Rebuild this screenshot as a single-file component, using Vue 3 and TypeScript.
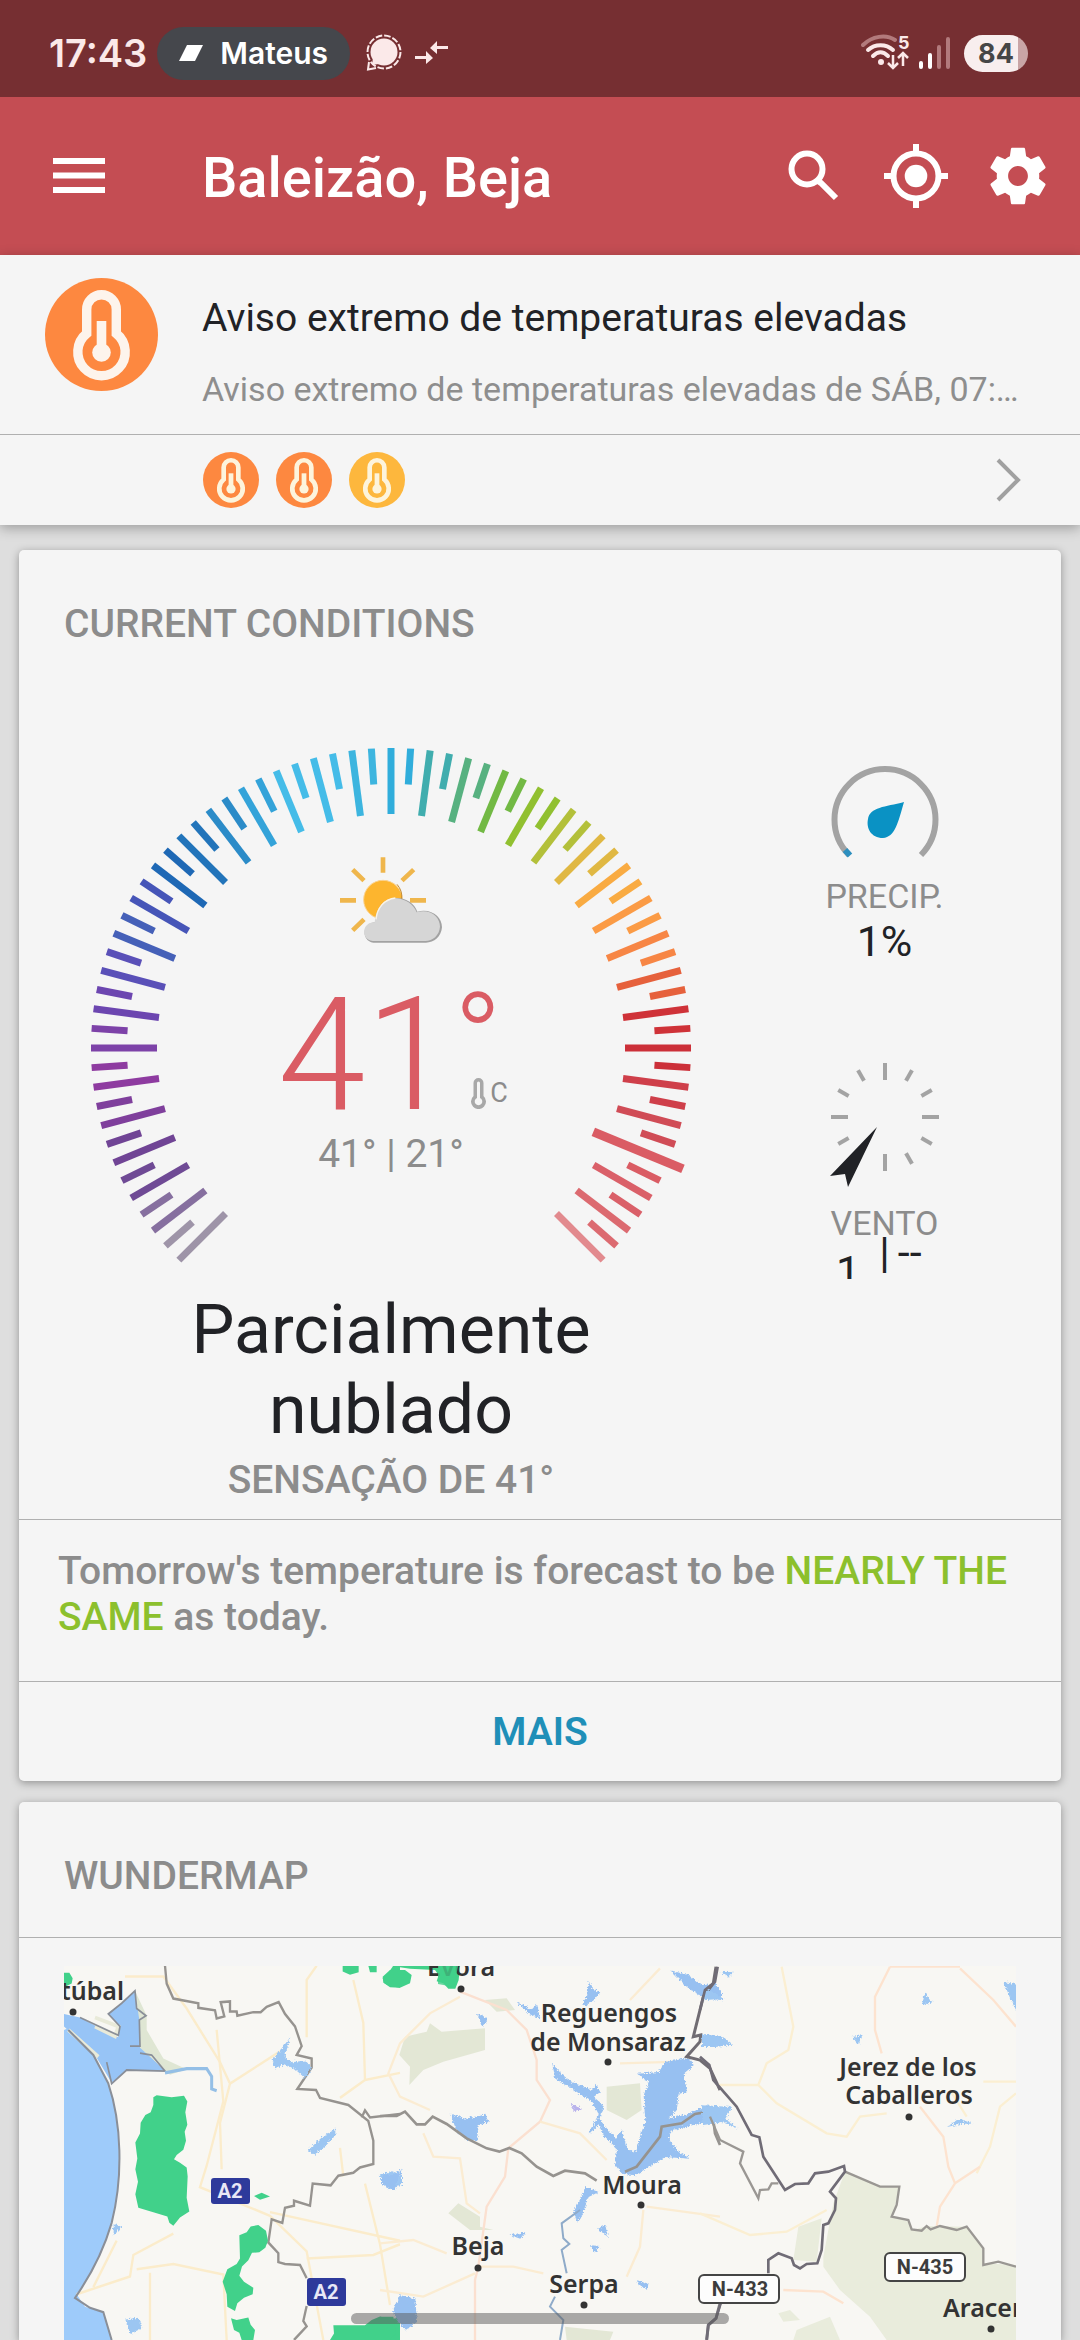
<script setup lang="ts">
interface Tick {
  angle: number
  inner: number
  outer: number
  width: number
  color: string
}

const scale: string[] = [
  '#9e94a8', '#866f9f', '#6f4a95', '#704495', '#7f3f9c', '#8e3ba0', '#7d42a8', '#6c46b0',
  '#5a50b8', '#4560b8', '#4655b8', '#1e68b5', '#2274ba', '#2b8bc8', '#34a3d9', '#45bce8',
  '#45bce8', '#3db5df', '#30addb', '#40adae', '#57b180', '#72b944', '#91c030', '#b3c03a',
  '#e0b843', '#f9ab42', '#fb9b45', '#f78645', '#e6613c', '#cf3238', '#cc3039', '#cf3f4a',
  '#d04c56', '#da5c64', '#da6069', '#dc6a70', '#e28a8e',
]

const currentStep = 33
const ticks: Tick[] = []
scale.forEach((color, i) => {
  const angle = -135 + i * 7.5
  const current = i === currentStep
  ticks.push({ angle, inner: current ? 219 : 234, outer: current ? 316 : 300, width: current ? 9 : 7, color })
  if (i < scale.length - 1) {
    ticks.push({ angle: angle + 3.75, inner: 264, outer: 300, width: 7, color })
  }
})

const compass = Array.from({ length: 12 }, (_, i) => i * 30).filter((a) => a !== 210)

const warnings = ['#fd8840', '#fd8840', '#fdb73d']

const stem = 'M41.7 55.5V31.5A14.8 14.8 0 0 1 71.3 31.5V55.5A23.7 23.7 0 1 1 41.7 55.5Z'

const cities = [
  { name: 'Reguengos', x: 545, y: 56 },
  { name: 'de Monsaraz', x: 544, y: 85 },
  { name: 'Moura', x: 578, y: 228 },
  { name: 'Beja', x: 414, y: 289 },
  { name: 'Serpa', x: 520, y: 327 },
  { name: 'Jerez de los', x: 844, y: 110 },
  { name: 'Caballeros', x: 845, y: 138 },
  { name: 'Évora', x: 397, y: 10 },
]
const dots = [
  [9, 46], [397, 23], [544, 96], [577, 239], [414, 302], [520, 339], [845, 151], [927, 363],
]
</script>

<template>
  <div class="page">
    <header>
      <div class="status">
        <span class="clock">17:43</span>
        <span class="call">
          <svg width="24" height="16" viewBox="0 0 24 16"><path d="M8 0H24L16 16H0Z" fill="#fff" /></svg>
          Mateus
        </span>
        <svg class="chat" width="36" height="38" viewBox="0 0 36 38" fill="none" stroke="#fbe9e9">
          <circle cx="18" cy="18" r="13.500" fill="#fbe9e9" stroke="none" />
          <circle cx="18" cy="18" r="16.500" stroke-width="2" stroke-dasharray="6.600 2" />
          <path d="M6 31L7 24L13 30Z" fill="#fbe9e9" stroke="none" />
          <path d="M3 28L2 35.500L10 34" stroke-width="2" />
        </svg>
        <svg width="34" height="24" viewBox="0 0 34 24" fill="#fbe9e9">
          <path d="M0 15H11V10L18 17L11 23V18H0Z M33 5H22V0L15 7L22 13V8H33Z" />
        </svg>
        <span class="spacer"></span>
        <svg class="wifi" width="50" height="38" viewBox="0 0 50 38" fill="none" stroke="#fbe9e9" stroke-width="4">
          <path d="M2 11C11 2 25 0 34 6" stroke="#b27a7c" stroke-linecap="round" />
          <path d="M7 16C14 9.500 25 9.500 32 16" stroke-linecap="round" />
          <path d="M12 22C17 17 22 17 27 22" stroke-linecap="round" />
          <circle cx="20" cy="28" r="3" fill="#fbe9e9" stroke="none" />
          <path d="M32 21V33M27 29L32 34L37 29M42 32V20M37 24L42 19L47 24" stroke-width="2.500" />
          <text x="37" y="15" font-size="18" font-weight="700" fill="#fbe9e9" stroke="none">5</text>
        </svg>
        <svg class="bars" width="32" height="36" viewBox="0 0 32 36" stroke-width="4" stroke-linecap="round">
          <path d="M2 28V32M11 20V32" stroke="#fff" />
          <path d="M20 12V32M29 4V32" stroke="#b27a7c" />
        </svg>
        <span class="battery">84</span>
      </div>
      <div class="appbar">
        <button aria-label="Menu">
          <svg width="54" height="64" viewBox="0 0 54 64" stroke="#fff" stroke-width="6">
            <path d="M1 17H53M1 31.500H53M1 46H53" />
          </svg>
        </button>
        <h1>Baleizão, Beja</h1>
        <button aria-label="Search">
          <svg width="64" height="64" viewBox="0 0 64 64" fill="none" stroke="#fff" stroke-width="6">
            <circle cx="23" cy="25" r="15.500" />
            <path d="M33 36L37 39L52 54" />
          </svg>
        </button>
        <button class="locate" aria-label="My location">
          <svg width="64" height="64" viewBox="0 0 64 64" fill="none" stroke="#fff" stroke-width="6">
            <circle cx="32" cy="32" r="22.500" />
            <circle cx="32" cy="32" r="11.300" fill="#fff" stroke="none" />
            <path d="M32 0V9M32 55V64M0 32H9M55 32H64" />
          </svg>
        </button>
        <button aria-label="Settings">
          <svg width="68" height="68" viewBox="0 0 24 24" fill="#fff">
            <path d="M19.430 12.980c.04-.32.07-.64.07-.98s-.03-.66-.07-.98l2.110-1.650c.19-.15.24-.42.12-.64l-2-3.460c-.12-.22-.39-.3-.61-.22l-2.490 1c-.52-.4-1.080-.73-1.690-.98l-.38-2.650C14.460 2.180 14.250 2 14 2h-4c-.25 0-.46.18-.49.42l-.38 2.650c-.61.25-1.170.59-1.690.98l-2.490-1c-.23-.09-.49 0-.61.22l-2 3.460c-.13.22-.07.49.12.64l2.110 1.650c-.04.32-.07.65-.07.98s.03.66.07.98l-2.110 1.650c-.19.15-.24.42-.12.64l2 3.460c.12.22.39.3.61.22l2.490-1c.52.4 1.080.73 1.690.98l.38 2.650c.03.24.24.42.49.42h4c.25 0 .46-.18.49-.42l.38-2.650c.61-.25 1.170-.59 1.690-.98l2.490 1c.23.09.49 0 .61-.22l2-3.460c.12-.22.07-.49-.12-.64l-2.110-1.650zM12 15.500c-1.930 0-3.500-1.570-3.500-3.500s1.570-3.500 3.500-3.500 3.500 1.570 3.500 3.500-1.570 3.500-3.500 3.500z" />
          </svg>
        </button>
      </div>
    </header>

    <section class="alert">
      <div class="alert-main">
        <svg width="113" height="113" viewBox="0 0 113 113">
          <circle cx="56.500" cy="56.500" r="56.500" fill="#fd8840" />
          <path :d="stem" fill="none" stroke="#fdf4ec" stroke-width="9.400" />
          <path d="M51.700 43H61.300V70H51.700Z" fill="#fdf4ec" />
          <circle cx="56.500" cy="74.500" r="9.300" fill="#fdf4ec" />
        </svg>
        <div class="alert-text">
          <h2>Aviso extremo de temperaturas elevadas</h2>
          <p>Aviso extremo de temperaturas elevadas de SÁB, 07:…</p>
        </div>
      </div>
      <div class="alert-more">
        <svg v-for="(color, i) in warnings" :key="i" width="56" height="56" viewBox="0 0 113 113">
          <circle cx="56.500" cy="56.500" r="56.500" :fill="color" />
          <path :d="stem" fill="none" stroke="#fdf4dc" stroke-width="9.400" />
          <path d="M51.700 43H61.300V70H51.700Z" fill="#fdf4dc" />
          <circle cx="56.500" cy="74.500" r="9.300" fill="#fdf4dc" />
        </svg>
        <span class="spacer"></span>
        <button aria-label="All warnings">
          <svg width="26" height="44" viewBox="0 0 26 44" fill="none" stroke="#a0a0a0" stroke-width="4">
            <path d="M2 2L22 22L2 42" />
          </svg>
        </button>
      </div>
    </section>

    <main>
      <section class="card">
        <h2 class="card-title">CURRENT CONDITIONS</h2>
        <div class="conditions">
          <div class="left">
            <div class="gauge">
              <svg class="dial" width="640" height="542" viewBox="-320 -300 640 542">
                <line
                  v-for="t in ticks"
                  :key="t.angle"
                  x1="0"
                  x2="0"
                  :y1="-t.inner"
                  :y2="-t.outer"
                  :stroke="t.color"
                  :stroke-width="t.width"
                  :transform="`rotate(${t.angle})`"
                />
              </svg>
              <div class="reading">
                <svg width="102" height="86" viewBox="114 52 306 256">
                  <path
                    d="M243 52V98M152 89L186 122M335 89L300 122M114 181H162M324 181H372M152 271L186 238"
                    stroke="#efb64c"
                    stroke-width="14"
                  />
                  <circle cx="243" cy="179" r="58" fill="#fdb52e" stroke="#fbd391" stroke-width="3" />
                  <path d="M285 133A57 57 0 0 1 299 177" fill="none" stroke="#c48a2e" stroke-width="3" />
                  <path
                    d="M222 247C224 205 250 174 285 174C312 174 338 190 346 215C390 204 420 232 420 262C418 290 396 308 372 308H214C178 304 178 247 222 247Z"
                    fill="#a2a2a2"
                  />
                  <path
                    d="M218 247C222 198 250 172 284 175C312 178 334 192 344 217C386 205 414 232 414 260C412 286 392 303 370 303H212C176 299 178 247 218 247Z"
                    fill="#d6d6d6"
                  />
                  <path d="M222 238C226 204 246 178 280 174" fill="none" stroke="#faf3e6" stroke-width="4" />
                </svg>
                <div class="temp">
                  <span class="value">41</span>
                  <span class="side">
                    <span class="degree">°</span>
                    <span class="unit">
                      <svg width="15" height="31" viewBox="0 0 15 31">
                        <path d="M2.500 5A5 5 0 0 1 12.500 5V18A7.500 7.500 0 1 1 2.500 18Z" fill="#a8a8a8" />
                        <path d="M6 5A1.500 1.500 0 0 1 9 5V20A3.800 3.800 0 1 1 6 20Z" fill="#f5f5f5" />
                      </svg>
                      C
                    </span>
                  </span>
                </div>
                <p class="range">41° | 21°</p>
              </div>
            </div>
            <p class="sky">Parcialmente nublado</p>
            <p class="feels">SENSAÇÃO DE 41°</p>
          </div>
          <div class="right">
            <svg width="112" height="113" viewBox="-56 -56 112 113" fill="none">
              <path d="M-36 36A50.500 50.500 0 1 1 36 36" stroke="#a3a3a3" stroke-width="6" />
              <path d="M-35 36.500L-40 31" stroke="#2d8fbf" stroke-width="6" />
              <path d="M19 -17C13 4 10 18 -2 19C-14 19 -19 9 -17 0C-15 -12 0 -12 19 -17Z" fill="#0a92c4" />
            </svg>
            <p class="label">PRECIP.</p>
            <p class="amount">1%</p>
            <svg class="wind" width="112" height="142" viewBox="-56 -56 112 142">
              <line
                v-for="a in compass"
                :key="a"
                x1="0"
                x2="0"
                :y1="a % 90 ? -42 : -37"
                y2="-54"
                stroke="#a3a3a3"
                stroke-width="4"
                :transform="`rotate(${a})`"
              />
              <path d="M-8 10L-55 59L-40 57L-37 70Z" fill="#212226" />
            </svg>
            <p class="label">VENTO</p>
            <p class="breeze"><span class="speed">1</span><span>|</span><span class="gust">--</span></p>
          </div>
        </div>
        <p class="forecast">
          Tomorrow's temperature is forecast to be <strong>NEARLY THE SAME</strong> as today.
        </p>
        <button class="more">MAIS</button>
      </section>

      <section class="card map-card">
        <h2 class="card-title">WUNDERMAP</h2>
        <div class="map-frame">
          <svg class="map" viewBox="0 0 952 374">
            <filter id="ragged" x="-5%" y="-5%" width="110%" height="110%">
              <feTurbulence type="turbulence" baseFrequency="0.12" numOctaves="2" seed="4" />
              <feDisplacementMap in="SourceGraphic" scale="12" xChannelSelector="R" yChannelSelector="G" />
              <feOffset dx="3" dy="3" />
            </filter>
            <rect width="952" height="374" fill="#f8f7f3" />
            <!-- western coast -->
            <g transform="translate(-24 -186) scale(0.33333 0.35714)" fill="none">
              <path d="M72 700L95 690L160 770L205 850C245 960 250 1110 215 1240C190 1320 150 1390 110 1440L135 1475L190 1490L215 1568H72Z" fill="#9ecbfa" />
              <path d="M72 655L120 665L190 700L235 720L240 690L205 655L245 625L285 590L290 640L318 660L298 672L300 745L375 815L260 812L215 848L165 770L72 690Z" fill="#97c4f6" />
              <path d="M165 665L235 690L225 718L165 690M85 700L175 775" stroke="#e9ead9" stroke-width="11" />
              <path d="M285 590L320 660V700L370 780L440 810L390 825L300 750L298 672Z" fill="#dfe6d3" />
              <g stroke="#fbeccb" stroke-width="7">
                <path d="M255 550H370L440 640L540 790L570 850L540 960L545 1090" />
                <path d="M530 700L550 900L500 1080L480 1140L690 1220L800 1320L850 1568" />
                <path d="M110 1440L270 1390L280 1330L400 1270M290 1370L400 1355L550 1385L560 1568M330 1380V1568M160 1420L230 1290" />
                <path d="M570 850L720 760M830 520L800 560V720M940 560L970 680L975 840M975 840L1080 820M975 840L900 890M900 1030L910 1110M690 1210L1080 1290M975 1130L1020 1300L1050 1470M800 1340L1000 1330L1080 1300" />
              </g>
              <path d="M85 700L160 770L205 850C245 960 250 1110 215 1240C190 1320 150 1390 105 1450L150 1478L190 1490L215 1568" stroke="#8a8f98" stroke-width="6" />
              <path d="M120 665L235 715L240 690L205 655L245 625L285 590L290 640L318 660L298 672L300 745H270M300 765L335 770L375 815L260 812L215 850L200 790" stroke="#8a8f98" stroke-width="5" />
              <path d="M375 820L440 808H500L515 830V865L530 870" stroke="#94bfe6" stroke-width="9" />
              <path d="M375 520L380 570L400 612L475 625V638L525 645L530 668L553 662L542 622L570 620V648H590L592 660L640 650H662L680 635L716 622L735 655L765 690L785 745L770 770L815 780V805L772 865L828 868L840 890L925 910L985 955L1000 1010V1075L960 1085L940 1100L895 1108L872 1135L818 1130L810 1192L762 1178V1192L735 1198L727 1240L695 1230L685 1295L715 1325V1350L735 1355L780 1358L800 1395M800 1473L790 1515L800 1530L762 1568M965 945L975 925L990 945L1080 935" stroke="#96938f" stroke-width="7" />
              <path filter="url(#ragged)" d="M745 715L720 745L690 780L700 802L730 790L760 805L790 830L810 800L790 780L750 785L728 770ZM880 970L840 995L800 1030L815 1045L850 1020L880 990ZM1010 1100L1050 1090L1080 1100V1130L1040 1140ZM250 1505L290 1500L298 1530L265 1545ZM1080 1440L1055 1490L1080 1500ZM215 1235L240 1245L215 1270Z" fill="#9cc6f2" />
              <g fill="#41d18a">
                <path d="M340 888L350 883L395 888L432 884L442 900L436 930L442 965L434 985L438 1010L430 1035L410 1050L402 1062L420 1072L440 1085L443 1110L440 1170L448 1208L420 1225L400 1248L388 1240L382 1222L340 1210L295 1198L286 1160L294 1125L286 1090L292 1060L286 1015L300 990L302 960L316 938L332 930L340 910Z" />
                <path d="M642 1165L665 1156L690 1166L660 1175Z" />
                <path d="M598 1275L620 1266L632 1250L655 1246L678 1262L684 1290L676 1310L658 1322L636 1324L625 1345L606 1362L598 1388L612 1405L640 1422L638 1440L612 1450L592 1465L585 1487L562 1475L560 1440L548 1405L562 1370L590 1355L600 1340Z" />
                <path d="M573 1507L590 1512L625 1505L632 1525L645 1540L640 1568H605L598 1548L582 1540Z" />
                <path d="M880 1527H975L995 1512L1020 1502L1050 1510L1080 1505V1568H870L882 1550Z" />
                <path d="M72 540L88 540L98 555L95 570L72 580ZM908 520H956V538L930 545L908 536ZM985 520H1010V538H990ZM1028 555L1045 540L1060 520H1080V582L1050 580L1034 570Z" />
              </g>
            </g>
            <!-- Alentejo -->
            <g transform="translate(316 -46) scale(0.33333)" fill="none">
              <path d="M75 350L140 335L150 310L185 335L315 325V390L190 425L130 450L88 495L90 440L58 405ZM205 880L235 850L300 890V920L340 930L270 930ZM315 240L380 235L405 270L350 275ZM680 500L780 490L785 570L740 600L680 570ZM555 1220L700 1235L690 1260H560Z" fill="#e3e7d5" />
              <g stroke="#fbecd2" stroke-width="7">
                <path d="M240 215L380 270L440 330L470 420V480L510 540L480 605L385 685L375 770L320 860L295 1040L285 1080V1260" stroke="#fbe0d0" />
                <path d="M240 230L150 280L60 370L25 460L60 530L150 570M480 605L600 640L680 720M130 640L160 710L240 715L260 850L300 880M0 970L100 960L200 1000M300 1040H400L490 1060M285 1060L130 1130L0 1110M790 870L780 980L740 1070M800 860L1020 890M840 145L750 240M720 430L900 425" />
              </g>
              <g fill="#97c0f1" filter="url(#ragged)">
                <path d="M620 178L635 205L655 210L635 235L610 252L598 245L615 225ZM405 240L450 262L465 245L475 290L440 275ZM285 275L318 290L300 315ZM205 575L250 590L310 578L320 600L290 610L285 655L255 655L225 630ZM0 755L30 760L62 740L45 780L40 805L0 790ZM385 940L430 930L415 950ZM35 1160L55 1120L100 1130L105 1200L70 1225L40 1185ZM645 920L670 910L678 945ZM622 970L655 972L640 990ZM765 1075L800 1085L795 1100L770 1090Z" />
                <path d="M510 420L530 450L570 480L630 505L640 485L655 510L635 525L665 550L655 595L700 650L720 625L735 680L760 690L775 640L790 600L785 520L800 480L765 455L830 450L850 420L920 408L935 430L905 455L915 510L890 515L885 560L860 590L920 575L975 550L1020 560V590L930 610L870 625L860 650L890 690L925 710L850 705L800 735L760 760L720 755L700 730L705 680L665 640L650 610L620 635L650 580L630 540L570 500L520 470Z" />
                <path d="M610 795L650 810L620 825L600 880L585 900L575 870L595 830ZM865 145L920 160L960 190L1000 185L1020 210V235L960 225L915 195ZM970 340L1020 345V375L980 365Z" />
                <path d="M565 545L600 560L580 570Z" fill="#b9b2ec" />
              </g>
              <path d="M600 870L545 910L550 955L568 972L545 990L560 1060M525 1130L510 1160L550 1200L540 1260" stroke="#8fabc9" stroke-width="6" />
              <path d="M0 588H50L75 575L110 613H135L158 590L200 612L260 655L320 685L358 695L388 684L425 700L470 740L520 768L555 752L615 760L650 782M735 755L770 740L840 650L845 620L905 610L945 582L985 575L1000 600L1005 640L1020 675" stroke="#96938f" stroke-width="8" />
              <path d="M1008 140L1000 190L970 230L940 350L962 345L960 365L920 410L960 420L990 445L1020 510" stroke="#706c72" stroke-width="9" />
              <path d="M1020 1150L1008 1195L985 1215L980 1260" stroke="#807d84" stroke-width="9" />
              <path d="M8 170L30 150L75 150L95 165L90 190L60 203L28 198L10 188ZM35 138H240L236 180L226 206L205 206L190 190L170 184L176 165L165 150L90 146Z" fill="#41d18a" />
              <path d="M0 1190H40L48 1240L30 1260H0Z" fill="#41d18a" />
            </g>
            <!-- Extremadura and Sierra de Aracena -->
            <g transform="translate(636 -46) scale(0.33333)" fill="none">
              <path d="M435 755L540 800H598L578 890L625 905L640 930L680 918L800 920L850 985V1030L948 1035V1260H560L510 1190L420 1110L370 1040V1010L400 850Z" fill="#e9ecdc" />
              <path d="M365 895L350 1025L280 1020L295 920ZM235 1180L270 1170L300 1200L250 1205ZM290 1230L390 1190L420 1260H280Z" fill="#e9ecdc" />
              <g stroke="#fbefd2" stroke-width="7">
                <path d="M245 140L280 320L265 390L200 430L175 495L50 495M175 495L230 550L380 640L440 650L480 590L560 580M948 485H850M948 520L900 560L870 680L830 760M800 590L750 510M0 880L150 945L260 935L380 870" />
                <path d="M570 140L525 230V330L545 400M660 560L730 650L745 740L765 790L720 860L710 920M765 790L840 740M780 145L880 240L948 320M250 1110L370 1115L430 1150M570 140H780" stroke="#fde3cf" />
              </g>
              <path filter="url(#ragged)" d="M670 210L680 230L692 240L660 248ZM450 345L482 340L470 368ZM905 180L948 188V275L925 230ZM735 615L770 590L815 605L780 605ZM0 335L60 345L90 368L40 375H0ZM0 550L90 555L70 590L110 620L60 600L0 610ZM15 200L65 230L0 235ZM55 150L95 150L80 165Z" fill="#9cc6f2" />
              <path d="M30 590L60 660L130 695L120 730L175 835L180 810L205 808L215 790H235M435 755L540 800H598L590 855L575 890L625 900L635 928L665 932L680 918L692 928L720 918L770 930L800 920L850 985V1035L895 1025L948 1040" stroke="#9a9793" stroke-width="7" />
              <path d="M53 140L45 185L15 210L0 270M0 410L28 435L40 480L110 560L155 645L178 652L190 710L255 810L285 792L325 790L345 760L385 755L432 738L435 755L390 815L408 835L405 870L385 910L370 915L365 990L352 1030L320 1032L300 1045L282 1035L275 1015L235 1000L205 1020V1060M62 1150L48 1195L25 1215L20 1260" stroke="#706c76" stroke-width="8" />
            </g>
            <g class="city">
              <text v-for="c in cities" :key="c.name" :x="c.x" :y="c.y" text-anchor="middle">{{ c.name }}</text>
              <text x="60" y="34" text-anchor="end">túbal</text>
              <text x="879" y="351">Aracen</text>
              <circle v-for="(d, i) in dots" :key="i" :cx="d[0]" :cy="d[1]" r="3.500" />
            </g>
            <path d="M374 0H394L390 21L374 18Z" fill="#41d18a" opacity="0.8" />
            <g fill="#2e3a9b">
              <rect x="147" y="212" width="39" height="26" rx="3" />
              <rect x="243" y="312" width="39" height="28" rx="3" />
            </g>
            <g fill="#fdfdfd" stroke="#454545" stroke-width="2">
              <rect x="635" y="309" width="80" height="28" rx="5" />
              <rect x="821" y="287" width="80" height="28" rx="5" />
            </g>
            <g class="shield" text-anchor="middle">
              <text x="166" y="232" fill="#e8e8f6">A2</text>
              <text x="262" y="333" fill="#e8e8f6">A2</text>
              <text x="676" y="330" fill="#3c3c3c">N-433</text>
              <text x="861" y="308" fill="#3c3c3c">N-435</text>
            </g>
          </svg>
        </div>
      </section>
    </main>
    <div class="home-bar"></div>
  </div>
</template>

<style>
body {
  background: #dedede;
}
</style>

<style scoped>
.page {
  font-family: Roboto, "Noto Sans", sans-serif;
  color: #212226;
  background: #dedede;
}
h1,
h2,
p {
  margin: 0;
}
svg {
  display: block;
  flex: none;
}
button {
  border: 0;
  padding: 0;
  background: none;
  font: inherit;
}
.spacer {
  flex: 1;
}
.status {
  display: flex;
  align-items: center;
  height: 97px;
  padding: 9px 52px 0 49px;
  box-sizing: border-box;
  background: #762f32;
  color: #fbe9e9;
  font-family: Inter, sans-serif;
}
.clock {
  font-size: 38px;
  font-weight: 600;
}
.call {
  display: flex;
  align-items: center;
  gap: 17px;
  height: 53px;
  margin: 0 16px 0 10px;
  padding: 0 22px;
  border-radius: 27px;
  background: #45474c;
  color: #fff;
  font-size: 30px;
  font-weight: 600;
}
.chat {
  margin-right: 13px;
}
.wifi {
  margin-right: 8px;
}
.bars {
  margin-right: 13px;
}
.battery {
  width: 64px;
  height: 37px;
  border-radius: 19px;
  background: linear-gradient(90deg, #f8eeee 84%, #c9a5a6 84%);
  color: #464646;
  font-size: 27px;
  font-weight: 700;
  line-height: 37px;
  text-align: center;
}
.appbar {
  display: flex;
  align-items: center;
  height: 158px;
  padding: 0 28px 0 52px;
  box-sizing: border-box;
  background: #c44d53;
  color: #fff;
}
.appbar h1 {
  flex: 1;
  margin-left: 96px;
  padding-top: 4px;
  font-size: 56px;
  font-weight: 500;
  line-height: 66px;
}
.locate {
  margin: 0 36px;
}
.alert {
  background: #f5f5f5;
  box-shadow: 0 3px 12px rgba(0, 0, 0, 0.3);
}
.alert-main {
  display: flex;
  gap: 44px;
  height: 180px;
  padding: 23px 54px 0 45px;
  box-sizing: border-box;
  border-bottom: 1px solid #b0b0b0;
}
.alert-text {
  min-width: 0;
  padding-top: 17px;
}
.alert h2 {
  font-size: 39px;
  font-weight: 400;
  line-height: 46px;
}
.alert p {
  margin-top: 28px;
  overflow: hidden;
  color: #8e8e8e;
  font-size: 34px;
  line-height: 40px;
  text-overflow: ellipsis;
  white-space: nowrap;
}
.alert-more {
  display: flex;
  align-items: center;
  gap: 17px;
  height: 90px;
  padding: 0 58px 0 203px;
}
main {
  display: flex;
  flex-direction: column;
  gap: 21px;
  padding: 25px 19px 0;
}
.card {
  border-radius: 5px;
  background: #f5f5f5;
  box-shadow: 0 2px 8px rgba(0, 0, 0, 0.35);
}
.card-title {
  padding: 51px 45px 0;
  color: #8c8c8c;
  font-size: 39px;
  font-weight: 500;
  line-height: 46px;
}
.conditions {
  display: grid;
  grid-template-columns: minmax(0, 744fr) minmax(0, 243fr);
  margin-top: 101px;
  padding: 0 55px 16px 0;
}
.left,
.right {
  display: flex;
  flex-direction: column;
  align-items: center;
}
.gauge {
  display: grid;
  justify-items: center;
}
.gauge > * {
  grid-area: 1 / 1;
}
.reading {
  display: flex;
  flex-direction: column;
  align-items: center;
  padding-top: 109px;
}
.temp {
  display: flex;
  height: 152px;
  margin-top: 36px;
  padding-left: 4px;
  color: #da5c64;
  font-weight: 300;
}
.value {
  font-size: 158px;
  line-height: 152px;
}
.side {
  display: flex;
  flex-direction: column;
  width: 55px;
}
.degree {
  height: 96px;
  font-size: 130px;
  line-height: 124px;
}
.unit {
  display: flex;
  align-items: center;
  gap: 4px;
  padding-left: 18px;
  color: #8c8c8c;
  font-size: 27px;
  font-weight: 400;
  line-height: 36px;
}
.range {
  color: #8c8c8c;
  font-size: 39px;
  line-height: 46px;
}
.sky {
  padding: 0 100px;
  font-size: 68px;
  line-height: 80px;
  text-align: center;
}
.feels {
  margin-top: 7px;
  color: #8c8c8c;
  font-size: 39px;
  font-weight: 500;
  line-height: 46px;
}
.right {
  padding-top: 15px;
}
.label {
  color: #8c8c8c;
  font-size: 34px;
  line-height: 40px;
}
.amount {
  font-size: 43px;
  line-height: 50px;
}
.wind {
  margin-top: 95px;
}
.breeze {
  display: grid;
  grid-template-columns: 1fr auto 1fr;
  align-self: stretch;
  font-size: 43px;
  line-height: 18px;
}
.speed {
  height: 36px;
  padding-right: 19px;
  overflow: hidden;
  line-height: 56px;
  text-align: right;
}
.gust {
  padding-left: 8px;
}
.forecast {
  padding: 28px 39px 41px;
  border-top: 1px solid #b0b0b0;
  color: #8c8c8c;
  font-size: 39px;
  font-weight: 500;
  line-height: 46px;
}
.forecast strong {
  color: #8cc02d;
  font-weight: 500;
}
.more {
  display: block;
  width: 100%;
  height: 100px;
  border-top: 1px solid #b0b0b0;
  color: #1f8fb8;
  font-size: 39px;
  font-weight: 600;
}
.map-card {
  border-radius: 5px 5px 0 0;
}
.map-card .card-title {
  padding-bottom: 38px;
  border-bottom: 1px solid #b0b0b0;
}
.map-frame {
  padding: 28px 45px 0;
}
.map {
  width: 100%;
  height: auto;
}
.city {
  fill: #333;
  font-family: "Noto Sans", "Open Sans", sans-serif;
  font-size: 25px;
  font-weight: 600;
}
.shield {
  font-size: 20px;
  font-weight: 700;
}
.home-bar {
  position: fixed;
  bottom: 16px;
  left: 50%;
  width: 35%;
  height: 11px;
  border-radius: 6px;
  background: rgba(90, 90, 90, 0.5);
  transform: translateX(-50%);
}
</style>
